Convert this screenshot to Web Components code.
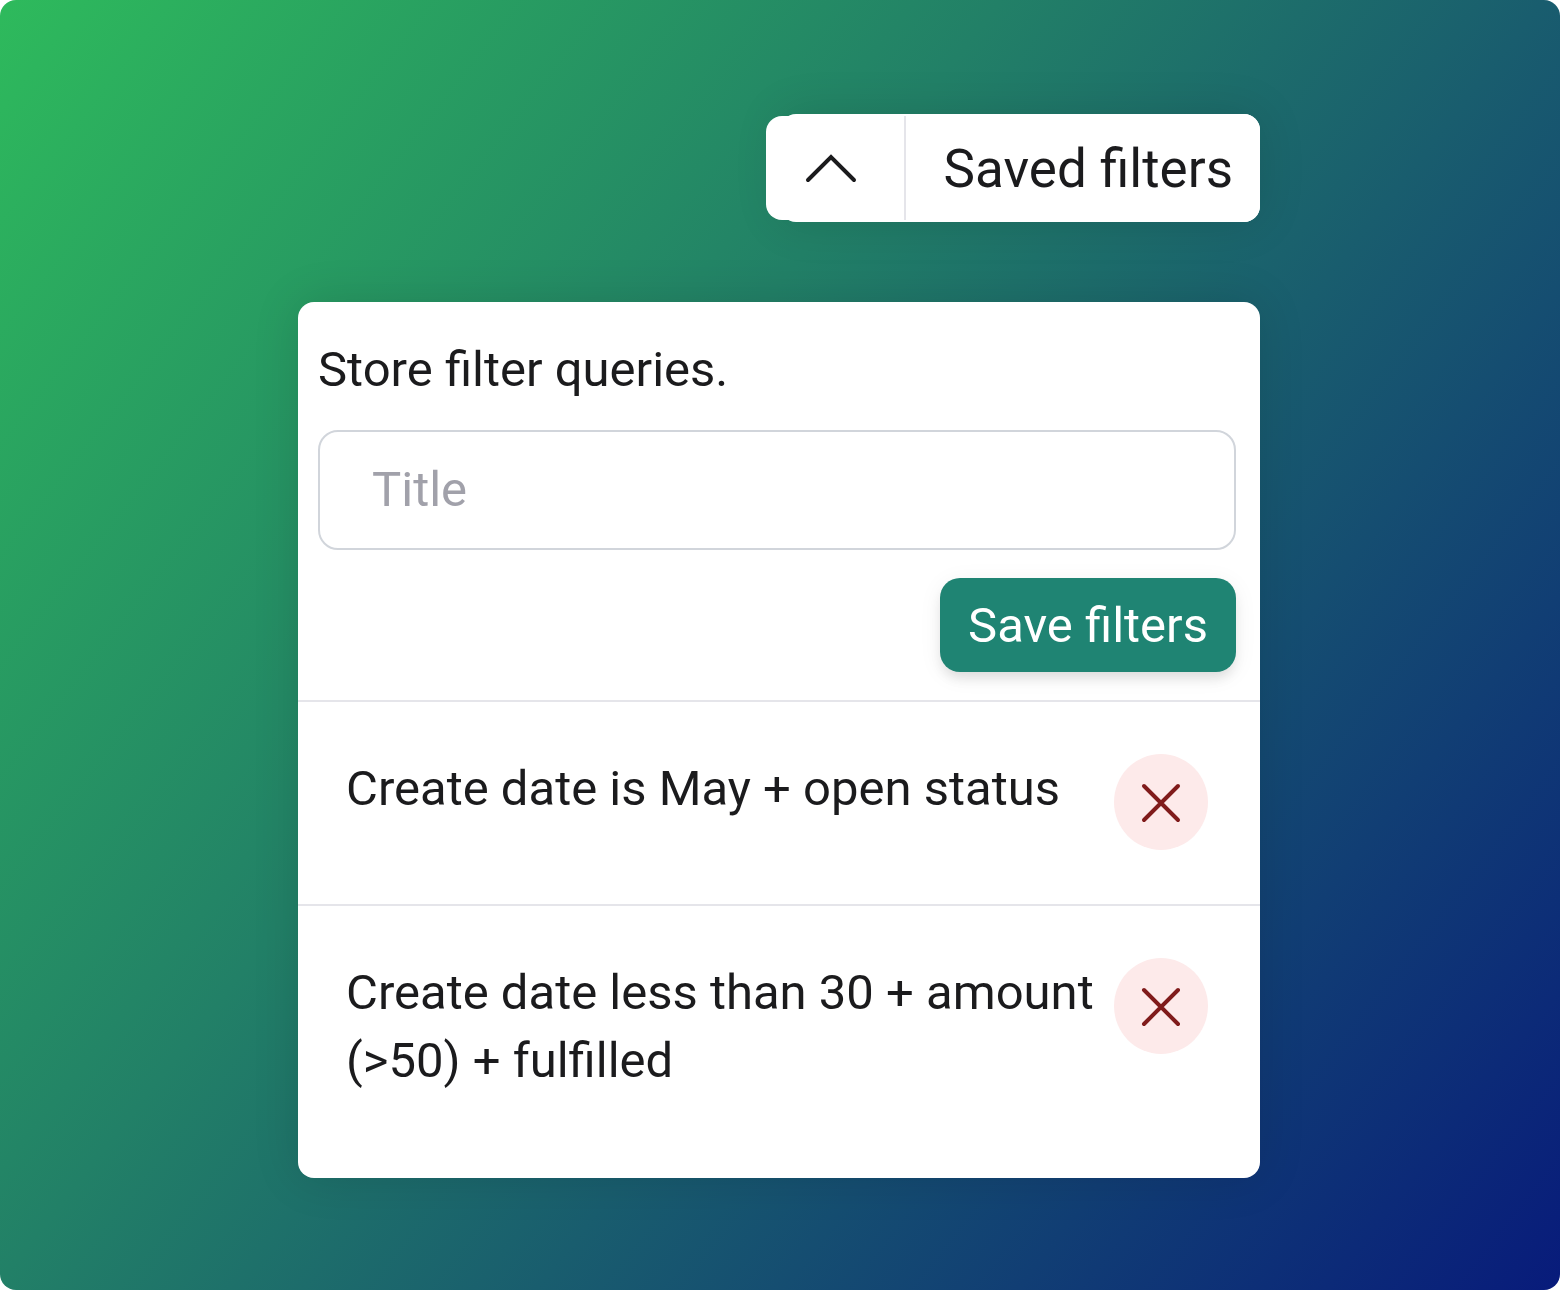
<!DOCTYPE html>
<html lang="en">
<head>
<meta charset="utf-8">
<title>Saved filters</title>
<style>
  html, body { margin: 0; background: #fff; }
  body { font-family: Roboto, "Liberation Sans", sans-serif; color: #1b1b1d; }
</style>
</head>
<body>
<filter-stage>
  <filter-toggle slot="toggle">Saved filters</filter-toggle>
  <filter-panel heading="Store filter queries.">
    <saved-filter>Create date is May + open status</saved-filter>
    <saved-filter>Create date less than 30 + amount (&gt;50) + fulfilled</saved-filter>
  </filter-panel>
</filter-stage>

<script>
function define(name, html, setup) {
  const template = document.createElement('template');
  template.innerHTML = '<style>*{box-sizing:border-box}</style>' + html;
  customElements.define(name, class extends HTMLElement {
    constructor() {
      super();
      this.attachShadow({ mode: 'open' }).append(template.content.cloneNode(true));
    }
    connectedCallback() { if (setup) setup(this, this.shadowRoot); }
  });
}

define('filter-stage', `
<style>
  :host { display: block; box-sizing: border-box; min-height: 100vh; padding: 114px 300px 112px 298px; border-radius: 16px;
    background: linear-gradient(128deg, #2eba5c, #228067 39%, #081b7b); }
  main { display: flex; flex-direction: column; gap: 80px; }
  .bar { display: flex; justify-content: flex-end; }
</style>
<main>
  <div class="bar"><slot name="toggle"></slot></div>
  <slot></slot>
</main>`);

define('filter-toggle', `
<style>
  :host { display: block; }
  .group { display: flex; align-items: center; border-radius: 16px; position: relative; }
  .group::before { content: ""; position: absolute; inset: 0 0 0 14px; border-radius: 16px; background: #fff;
    box-shadow: 0 0 48px rgba(0, 0, 0, .12); }
  button { position: relative; font: inherit; color: inherit; border: 0; margin: 0; background: #fff; cursor: pointer; }
  .chevron { display: flex; align-items: center; justify-content: center; width: 140px; height: 104px; padding: 0 8px 0 0;
    border-right: 2px solid #e5e5ea; border-radius: 16px 0 0 16px; }
  .label { height: 108px; padding: 2px 27px 0 38px; font-size: 53px; line-height: 72px; border-radius: 0 16px 16px 0; }
  svg { display: block; }
</style>
<div class="group">
  <button class="chevron" aria-label="Collapse saved filters">
    <svg width="54" height="32" viewBox="0 0 54 32" fill="none" stroke="#1b1b1d" stroke-width="4" stroke-linecap="round" stroke-linejoin="miter"><path d="M4 28 27 5 50 28"/></svg>
  </button>
  <button class="label"><slot></slot></button>
</div>`);

define('filter-panel', `
<style>
  :host { display: block; background: #fff; border-radius: 16px; box-shadow: 0 0 48px rgba(0, 0, 0, .12); padding-bottom: 30px; }
  form { display: flex; flex-direction: column; padding: 34px 24px 28px 20px; border-bottom: 2px solid #e5e5ea; }
  label { font-size: 49px; line-height: 68px; margin-bottom: 26px; }
  input { width: 100%; height: 120px; padding: 0 52px 2px; border: 2px solid #d1d5db; border-radius: 20px; background: #fff;
    font: inherit; font-size: 49px; color: inherit; outline: 0; }
  input::placeholder { color: #a1a1aa; opacity: 1; }
  button { align-self: flex-end; height: 94px; margin-top: 28px; padding: 0 28px; border: 0; border-radius: 20px;
    background: #1f8473; color: #fff; font: inherit; font-size: 49px; cursor: pointer;
    box-shadow: 0 8px 12px -2px rgba(0, 0, 0, .1), 0 4px 24px rgba(0, 0, 0, .06); }
</style>
<form onsubmit="return false">
  <label for="title"></label>
  <input id="title" type="text" placeholder="Title">
  <button type="submit">Save filters</button>
</form>
<slot></slot>`, (host, root) => {
  root.querySelector('label').textContent = host.getAttribute('heading');
});

define('saved-filter', `
<style>
  :host { display: flex; align-items: flex-start; justify-content: space-between; gap: 8px; padding: 52px 52px 54px 48px; }
  :host(:not(:last-child)) { border-bottom: 2px solid #e5e5ea; }
  :host(:last-child) { padding-bottom: 53px; }
  p { flex: 1; margin: 0; padding-top: 1px; font-size: 49px; line-height: 68px; }
  button { flex: none; display: flex; align-items: center; justify-content: center; width: 94px; height: 96px; padding: 0;
    border: 0; border-radius: 50%; background: #fdeaea; cursor: pointer; }
</style>
<p><slot></slot></p>
<button aria-label="Delete filter">
  <svg width="42" height="42" viewBox="0 0 42 42" fill="none" stroke="#801b1b" stroke-width="4" stroke-linecap="round"><path d="M4 5 38 39M38 5 4 39"/></svg>
</button>`);
</script>
</body>
</html>
